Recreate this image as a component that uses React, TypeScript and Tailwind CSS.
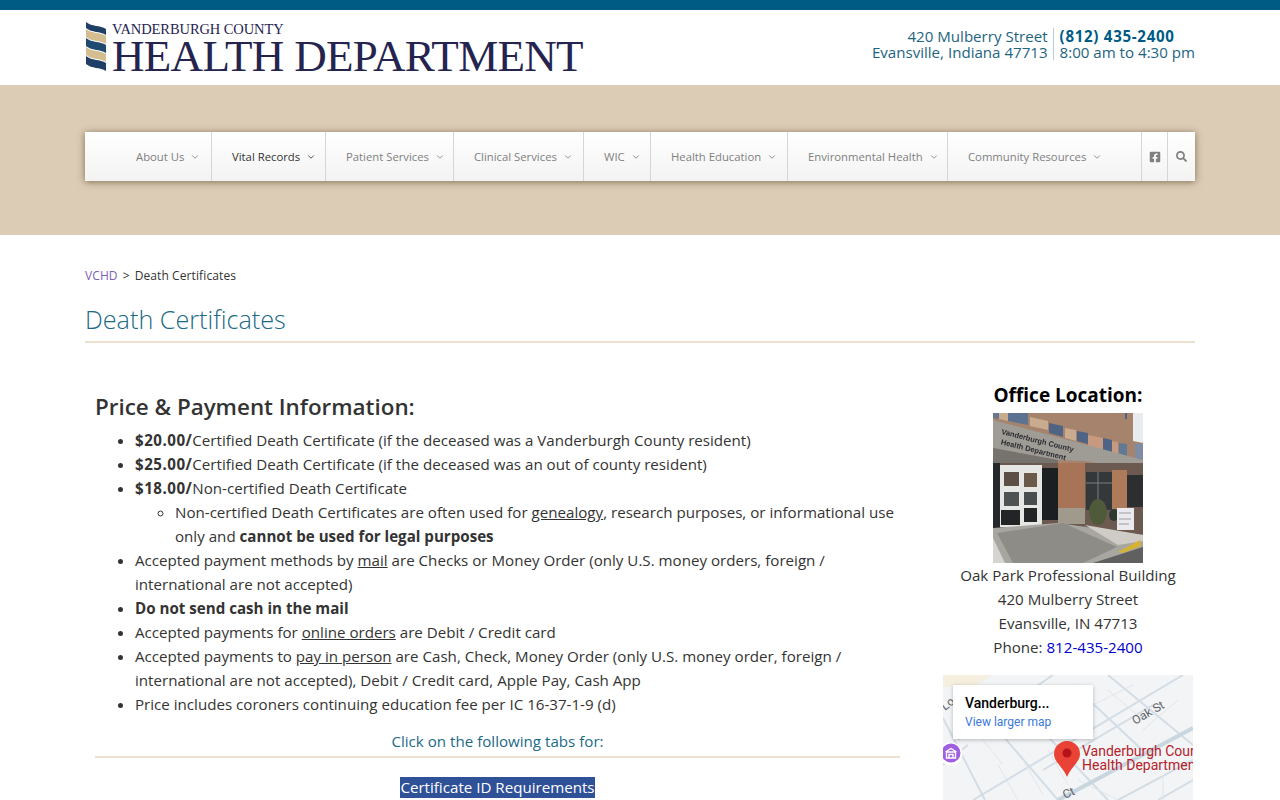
import React from 'react';
import { ChevronDown } from 'lucide-react';
import { FaFacebookSquare, FaSearch } from 'react-icons/fa';

const navItems = [
  { label: 'About Us', width: 'w-[127px] pl-[51px]' },
  { label: 'Vital Records', width: 'w-[114px] pl-5', active: true },
  { label: 'Patient Services', width: 'w-[128px] pl-5' },
  { label: 'Clinical Services', width: 'w-[130px] pl-5' },
  { label: 'WIC', width: 'w-[67px] pl-5' },
  { label: 'Health Education', width: 'w-[137px] pl-5' },
  { label: 'Environmental Health', width: 'w-[160px] pl-5' },
  { label: 'Community Resources', width: 'w-[194px] pl-5' },
];

const Logo = () => (
  <div className="flex items-start">
    <svg width="21" height="50" viewBox="0 0 21 50" className="mt-[12px] ml-px shrink-0">
      <path d="M0 0C6 5 14 3 20 7V13C14 9 6 11 0 6Z" fill="#1f3f66" />
      <path d="M0 7C6 12 14 10 20 14V22C14 18 6 20 0 15Z" fill="#d5bd92" />
      <path d="M0 16C6 21 14 19 20 23V31C14 27 6 29 0 24Z" fill="#1f4a70" />
      <path d="M0 25C6 30 14 28 20 32V40C14 36 6 38 0 33Z" fill="#d5bd92" />
      <path d="M0 34C6 39 14 37 20 41V49C14 45 6 47 0 42Z" fill="#1f3f66" />
    </svg>
    <div className="ml-[5px] text-[#25244f] font-['Liberation_Serif',serif]">
      <div className="mt-[11px] text-[14.5px] leading-[16px] tracking-[-0.1px]">VANDERBURGH COUNTY</div>
      <div className="text-[45px] leading-[38px] tracking-[-0.7px] whitespace-nowrap">HEALTH DEPARTMENT</div>
    </div>
  </div>
);

const Photo = () => (
  <svg width="150" height="150" viewBox="0 0 150 150" className="block blur-[0.4px]">
    <rect width="150" height="150" fill="#a5836c" />
    <path d="M140 0H150V30L140 28Z" fill="#e9ecef" />
    <path d="M132 0H134V6H132Z" fill="#4f6484" />
    <path d="M0 0H6V6L0 5Z" fill="#66778f" />
    <path d="M6 0H15V8L6 6Z" fill="#c9ab90" />
    <path d="M15 0H35V12L15 8Z" fill="#5d7290" />
    <path d="M37 4L55 8V17L37 13Z" fill="#c9ab90" />
    <path d="M56 10L70 13V24L56 20Z" fill="#4f6484" />
    <path d="M72 15L83 17V28L72 25Z" fill="#c9ab90" />
    <path d="M84 18L95 20V31L84 28Z" fill="#4f6484" />
    <path d="M95 22L110 25V37L95 33Z" fill="#c79a80" />
    <path d="M110 25L119 27V40L110 38Z" fill="#4f6484" />
    <path d="M119 28L125 29V41L119 40Z" fill="#c79a80" />
    <path d="M126 30L134 31V43L126 42Z" fill="#607a96" />
    <path d="M142 30L150 31V47L142 45Z" fill="#7d8da3" />
    <path d="M0 7L150 47V58L92 48L65 47L0 35Z" fill="#9f9c96" />
    <path d="M0 35L65 47V52H0Z" fill="#76736f" />
    <path d="M0 50H150V125H0Z" fill="#6c5a50" />
    <rect x="0" y="50" width="7" height="65" fill="#26282b" />
    <rect x="7" y="52" width="42" height="62" fill="#e6e6e4" />
    <rect x="11" y="59" width="15" height="14" fill="#5b4f45" />
    <rect x="31" y="60" width="13" height="14" fill="#6b5a49" />
    <rect x="11" y="79" width="15" height="14" fill="#4f5253" />
    <rect x="31" y="79" width="13" height="13" fill="#4a4d4e" />
    <rect x="8" y="97" width="19" height="15" fill="#232426" />
    <rect x="31" y="95" width="13" height="14" fill="#232426" />
    <rect x="49" y="55" width="16" height="52" fill="#1c1f22" />
    <rect x="65" y="50" width="27" height="46" fill="#a87457" />
    <rect x="65" y="95" width="27" height="16" fill="#a09a8d" />
    <rect x="93" y="59" width="26" height="38" fill="#34383a" />
    <path d="M93 70H119M105 59V97" stroke="#7d7f7d" strokeWidth="1" />
    <rect x="119" y="57" width="15" height="39" fill="#ad7b5a" />
    <rect x="134" y="62" width="16" height="32" fill="#2c2e30" />
    <path d="M0 115L65 110L150 122V150H0Z" fill="#a8a6a0" />
    <path d="M4 120L70 110L124 134L90 150H20Z" fill="#8e8c87" />
    <path d="M0 125L12 150H0Z" fill="#d6d4d1" />
    <path d="M92 112L150 122V128L125 132Z" fill="#cfccc7" />
    <ellipse cx="105" cy="99" rx="9" ry="13" fill="#4e5a3a" />
    <ellipse cx="121" cy="102" rx="5" ry="6" fill="#2e3a30" />
    <rect x="124" y="95" width="17" height="22" fill="#e9e9ee" />
    <path d="M126 100H138M126 106H138M126 111H136" stroke="#9a9aa5" strokeWidth="1" />
    <path d="M125 139L147 127L148 133L129 140Z" fill="#d6b233" />
    <path d="M100 150L150 134V150Z" fill="#5f605f" />
    <g transform="rotate(14 8 21)" fill="#2a2b30" fontFamily="Liberation Sans, sans-serif" fontWeight="700" fontSize="7.5">
      <text x="8" y="21">Vanderburgh County</text>
      <text x="10" y="31">Health Department</text>
    </g>
  </svg>
);

const MapEmbed = () => (
  <div className="relative h-[125px] w-[250px] overflow-hidden">
    <svg width="250" height="125" viewBox="0 0 250 125" className="block">
      <rect width="250" height="125" fill="#f3f4f6" />
      <path d="M0 0H50L30 12H0Z" fill="#f5efdf" />
      <g fill="none" stroke="#d3dde5" strokeWidth="2">
        <path d="M0 43L42 125M42 40L115 125M75 30L165 125M130 10L210 85M165 0L250 70" />
        <path d="M15 65L110 0M30 125L240 0M100 95L210 30M175 125L250 85" />
        <path d="M0 90L25 70M215 125L250 105" />
      </g>
      <g fill="none" stroke="#e0e6eb" strokeWidth="1">
        <path d="M105 75L125 110M80 85L100 120M165 15L200 45M200 55L235 25" />
        <path d="M135 105L175 125M40 65L60 90M55 90L75 125M150 30L190 10M220 100V125" />
      </g>
      <path d="M115 125L250 53" fill="none" stroke="#c8d6e0" strokeWidth="4" />
      <circle cx="8" cy="79" r="11.5" fill="#fff" />
      <circle cx="8" cy="78" r="9.5" fill="#a05fe0" />
      <path d="M3.5 83V77H12.5V83ZM2.5 77L8 73.5L13.5 77M6 83V79.5H10V83" fill="none" stroke="#fff" strokeWidth="1.4" />
      <path d="M124 102C120 92 111 87 111 79A13 13 0 0 1 137 79C137 87 128 92 124 102Z" fill="#ea4335" />
      <circle cx="124" cy="78" r="4.5" fill="#b3141a" />
      <g fill="#b3232a" fontFamily="Roboto, sans-serif" fontSize="14">
        <text x="139" y="81">Vanderburgh County</text>
        <text x="139" y="95">Health Department</text>
      </g>
      <g fill="#5f6368" fontFamily="Roboto, sans-serif" fontSize="12">
        <text x="192" y="50" transform="rotate(-30 192 50)">Oak St</text>
        <text x="2" y="36" transform="rotate(-38 2 36)">Lo</text>
        <text x="122" y="124" transform="rotate(-25 122 124)">Ct</text>
      </g>
    </svg>
    <div className="absolute left-[10px] top-[10px] h-[54px] w-[140px] bg-white px-3 pt-[10px] font-['Roboto',sans-serif] shadow-[0_1px_4px_rgba(0,0,0,0.25)]">
      <div className="text-sm font-medium leading-[17px] text-black">Vanderburg...</div>
      <div className="mt-[3px] text-xs leading-[15px] text-[#3b78d8]">View larger map</div>
    </div>
  </div>
);

export default function App() {
  return (
    <div className="h-[800px] overflow-hidden bg-white font-['Open_Sans',sans-serif] text-[15.13px] text-[#333]">
      <div className="h-[10px] bg-[#005b84]" />
      <header className="mx-auto flex h-[75px] w-[1110px] justify-between">
        <Logo />
        <div className="flex pt-[18px] text-[15.1px] leading-4 text-[#1d6480]">
          <div className="h-8 border-r border-[#b5cbd6] pr-[5px] text-right">
            <div>420 Mulberry Street</div>
            <div>Evansville, Indiana 47713</div>
          </div>
          <div className="pl-[6px]">
            <div className="font-bold tracking-[0.7px] text-[#005b84]">(812) 435-2400</div>
            <div>8:00 am to 4:30 pm</div>
          </div>
        </div>
      </header>

      <div className="h-[150px] bg-[#dccbb5] pt-[47px]">
        <nav className="mx-auto flex h-[49px] w-[1110px] bg-gradient-to-b from-white to-[#f3f3f3] text-[11.3px] shadow-[0_1px_7px_rgba(90,70,40,0.7)]">
          {navItems.map((item) => (
            <div
              key={item.label}
              className={`flex items-center gap-[6px] border-r border-[#d6d6d6] pt-px ${item.width} ${item.active ? 'text-[#333]' : 'text-[#808080]'}`}
            >
              <span className="whitespace-nowrap">{item.label}</span>
              <ChevronDown className="h-[10px] w-[10px]" strokeWidth={2} />
            </div>
          ))}
          <div className="flex w-[26px] items-center justify-center border-r border-[#d6d6d6] text-[#808080]">
            <FaFacebookSquare className="h-3 w-3" />
          </div>
          <div className="flex w-[27px] items-center justify-center text-[#808080]">
            <FaSearch className="h-[11px] w-[11px]" />
          </div>
        </nav>
      </div>

      <main className="mx-auto w-[1110px]">
        <div className="pt-[32px] text-xs leading-[17px] tracking-[0.1px] text-[#333]">
          <span className="text-[#7e61b5]">VCHD</span><span className="mx-[5px]">&gt;</span>Death Certificates
        </div>
        <h1 className="mt-[15px] border-b-2 border-[#eee0d0] pb-[2px] text-[25.2px] font-light leading-[40px] text-[#1c6a86]">
          Death Certificates
        </h1>

        <div className="flex pt-[40px]">
          <div className="ml-[10px] w-[805px]">
            <h2 className="pt-[9px] text-[22.4px] font-semibold leading-[30px] text-[#333]">Price &amp; Payment Information:</h2>
            <ul className="mt-[6px] list-disc pl-10 leading-6">
              <li><b className="tracking-[0.5px]">$20.00/</b>Certified Death Certificate (if the deceased was a Vanderburgh County resident)</li>
              <li><b className="tracking-[0.5px]">$25.00/</b>Certified Death Certificate (if the deceased was an out of county resident)</li>
              <li>
                <b className="tracking-[0.5px]">$18.00/</b>Non-certified Death Certificate
                <ul className="list-[circle] pl-10">
                  <li>Non-certified Death Certificates are often used for <u>genealogy</u>, research purposes, or informational use only and <b>cannot be used for legal purposes</b></li>
                </ul>
              </li>
              <li>Accepted payment methods by <u>mail</u> are Checks or Money Order (only U.S. money orders, foreign / international are not accepted)</li>
              <li><b>Do not send cash in the mail</b></li>
              <li>Accepted payments for <u>online orders</u> are Debit / Credit card</li>
              <li>Accepted payments to <u>pay in person</u> are Cash, Check, Money Order (only U.S. money order, foreign / international are not accepted), Debit / Credit card, Apple Pay, Cash App</li>
              <li>Price includes coroners continuing education fee per IC 16-37-1-9 (d)</li>
            </ul>
            <div className="mt-[13px] border-b-2 border-[#eee0d0] pb-[3px] text-center leading-6 text-[#1c6a86]">Click on the following tabs for:</div>
            <div className="mt-[18px] text-center">
              <span className="inline-block bg-[#2f5197] leading-[21px] text-white">Certificate ID Requirements</span>
            </div>
          </div>

          <aside className="ml-[43px] flex w-[250px] flex-col items-center leading-6">
            <h3 className="text-[19px] font-bold leading-[24px] text-black">Office Location:</h3>
            <div className="mt-[6px]"><Photo /></div>
            <p className="text-center">
              Oak Park Professional Building<br />
              420 Mulberry Street<br />
              Evansville, IN 47713<br />
              Phone: <span className="text-[#0000cd]">812-435-2400</span>
            </p>
            <div className="mt-[16px]"><MapEmbed /></div>
          </aside>
        </div>
      </main>
    </div>
  );
}
